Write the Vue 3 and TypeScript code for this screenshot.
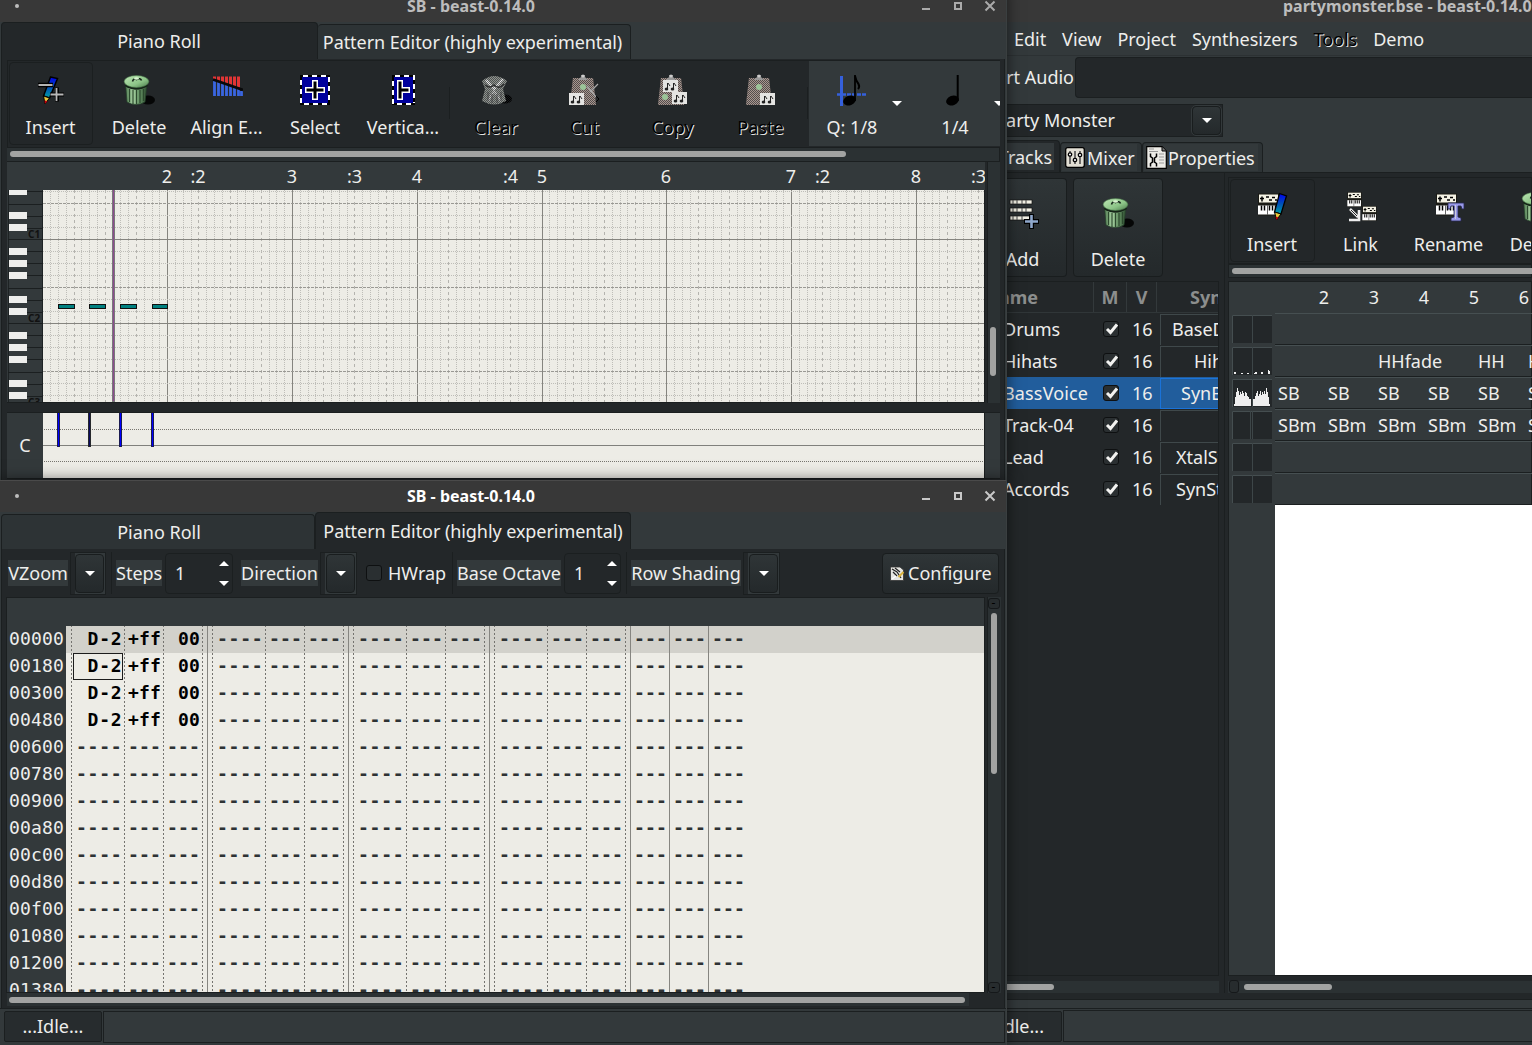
<script setup lang="ts">
interface Tool { label: string; icon: string; width: number; kind?: string }

const rollTools: Tool[] = [
  { label: 'Insert', icon: 'pencil', width: 84, kind: 'framed' },
  { label: 'Delete', icon: 'trash', width: 88 },
  { label: 'Align E...', icon: 'align', width: 87 },
  { label: 'Select', icon: 'select', width: 90 },
  { label: 'Vertica...', icon: 'vselect', width: 86 },
  { label: '', icon: '', width: 6, kind: 'sep' },
  { label: 'Clear', icon: 'clear', width: 89, kind: 'off' },
  { label: 'Cut', icon: 'cut', width: 88, kind: 'off' },
  { label: 'Copy', icon: 'copy', width: 88, kind: 'off' },
  { label: 'Paste', icon: 'paste', width: 88, kind: 'off' },
  { label: '', icon: '', width: 5, kind: 'sep' },
]
const trackTools: Tool[] = [
  { label: 'Insert', icon: 'tinsert', width: 85, kind: 'framed' },
  { label: 'Link', icon: 'tlink', width: 87 },
  { label: 'Rename', icon: 'trename', width: 89 },
  { label: 'Delete', icon: 'trash', width: 88 },
]

const ruler = [
  { x: 160, t: '2' }, { x: 191, t: ':2' }, { x: 285, t: '3' }, { x: 347.5, t: ':3' }, { x: 410, t: '4' },
  { x: 503.5, t: ':4' }, { x: 535, t: '5' }, { x: 659, t: '6' }, { x: 784, t: '7' }, { x: 815.5, t: ':2' },
  { x: 909, t: '8' }, { x: 971.5, t: ':3' },
]

// vertical grid: 16 ticks per bar, every fourth is a beat
const ticks = Array.from({ length: 120 }, (_, i) => {
  const k = i + 1
  return { x: Math.round(42.4 + 7.8 * k) - 43 + 0.5, kind: k % 16 === 0 ? 'bar' : k % 4 === 0 ? 'beat' : 'tick' }
})
const semis = Array.from({ length: 18 }, (_, i) => ({
  y: 1.5 + 12 * i,
  kind: i % 7 === 4 ? 'bar' : i % 7 === 1 ? 'mid' : 'dot',
}))
const blackKeys = [-2, 22, 34, 58, 70, 82, 106, 118, 142, 154, 166, 190, 202]
const notes = [[15, 17], [46, 17], [77, 17], [109, 16]]
const events = [14, 45, 76, 108]

const rows = ['00000', '00180', '00300', '00480', '00600', '00780', '00900', '00a80', '00c00', '00d80', '00f00', '01080', '01200', '01380']
const cells = [
  { w: 52, d: 4 }, { w: 39, d: 3 }, { w: 50, d: 3 },
  { w: 52, d: 4 }, { w: 39, d: 3 }, { w: 50, d: 3 },
  { w: 52, d: 4 }, { w: 39, d: 3 }, { w: 50, d: 3 },
  { w: 52, d: 4 }, { w: 39, d: 3 }, { w: 44, d: 3 },
  { w: 39, d: 3 }, { w: 39, d: 3 }, { w: 39, d: 3 },
]
const played = [' D-2', '+ff', ' 00']
const cellText = (r: number, c: number) => (r < 4 && c < 3 ? played[c] : '-'.repeat(cells[c].d))
const dashed = [5, 58, 97, 136, 146, 199, 238, 277, 287, 340, 379, 418, 428, 481, 520, 559]
const solid = [141, 282, 423, 564, 603, 642]

const tracks = [
  { name: 'Drums', syn: 'BaseD', pad: 11 },
  { name: 'Hihats', syn: 'Hih', pad: 33 },
  { name: 'BassVoice', syn: 'SynB', pad: 20 },
  { name: 'Track-04', syn: '', pad: 0 },
  { name: 'Lead', syn: 'XtalSt', pad: 15 },
  { name: 'Accords', syn: 'SynSt', pad: 15 },
]
const parts = [
  ['', '', '', '', '', ''],
  ['', '', 'HHfade', '', 'HH', 'HH'],
  ['SB', 'SB', 'SB', 'SB', 'SB', 'SB'],
  ['SBm', 'SBm', 'SBm', 'SBm', 'SBm', 'SBm'],
  ['', '', '', '', '', ''],
  ['', '', '', '', '', ''],
]
const menu = ['Edit', 'View', 'Project', 'Synthesizers', 'Tools', 'Demo']
</script>

<template>
  <div class="desktop">
    <svg class="defs" width="0" height="0">
      <defs>
        <linearGradient id="gcan" x1="0" x2="1"><stop offset="0" stop-color="#4f7a50" /><stop offset=".35" stop-color="#a9d3a4" /><stop offset=".6" stop-color="#6d9b6c" /><stop offset="1" stop-color="#2f4d31" /></linearGradient>
        <linearGradient id="glid" x1="0" x2="1" y1="0" y2="1"><stop offset="0" stop-color="#bfe8b6" /><stop offset=".6" stop-color="#8cc487" /><stop offset="1" stop-color="#4b7a4c" /></linearGradient>
        <linearGradient id="gpen" x1="0" x2="0" y1="0" y2="1"><stop offset="0" stop-color="#0000f0" /><stop offset=".5" stop-color="#0050b8" /><stop offset="1" stop-color="#00a0a0" /></linearGradient>
        <pattern id="dither" width="2" height="2" patternUnits="userSpaceOnUse"><rect width="1" height="1" fill="#232729" /><rect x="1" y="1" width="1" height="1" fill="#232729" /></pattern>
        <symbol id="trash" viewBox="0 0 32 32">
          <ellipse cx="25" cy="26" rx="7" ry="4.500" fill="#050606" />
          <path d="M2.500 9 L4 28 Q13 33 22 28 L24 9Z" fill="url(#gcan)" stroke="#24402a" stroke-width=".7" />
          <path d="M6.500 15v13M10 16v14M13.500 16v14M17 16v13M20.500 15v12" stroke="#2c4a2e" stroke-width="1.200" />
          <path d="M2.500 11 Q13 18 24.500 11" stroke="#142417" stroke-width="2.600" fill="none" />
          <ellipse cx="13.500" cy="7.500" rx="12.300" ry="6" fill="url(#glid)" stroke="#48754a" stroke-width=".6" />
          <path d="M9.500 7.500 Q10.500 4 13.500 5.500 Q17.500 3.500 18.500 6.500" stroke="#16261a" stroke-width="1.600" fill="none" />
          <ellipse cx="13.500" cy="4.500" rx="2.500" ry="1.200" fill="#d8f5d0" />
        </symbol>
        <symbol id="pencil" viewBox="0 0 32 32">
          <path d="M15.500 3 L22.500 4.500 L14.500 24 L8.500 22Z" fill="url(#gpen)" stroke="#000" stroke-width="1.500" />
          <path d="M8.500 22 L14.500 24 L10 30Z" fill="#e8c83c" stroke="#000" /><path d="M9.500 26.500 L12.500 27 L10 30Z" fill="#c00010" />
          <path d="M3 11H18" stroke="#000" stroke-width="4.500" /><path d="M3.500 11H17.500" stroke="#b4b4b4" stroke-width="2" />
          <path d="M15 20.500H29M22 13.500V27.500" stroke="#000" stroke-width="4" /><path d="M15.500 20.500H28.500M21.500 14V27" stroke="#b8b8b8" stroke-width="1.800" />
        </symbol>
        <symbol id="align" viewBox="0 0 32 32">
          <path d="M3.500 2.500v4M7.500 2.500v5M11.500 2.500v6M15.500 2.500v8M19.500 2.500v9M23.500 2.500v10M27.500 2.500v11" stroke="#e03535" stroke-width="3" />
          <path d="M3.500 7v15M7.500 8v14M11.500 9v13M15.500 11v11M19.500 12v10M23.500 14v8M27.500 15v7M30.500 17v5" stroke="#3a66e0" stroke-width="2.800" />
          <path d="M2 5.500L32 16" stroke="#08090a" stroke-width="2.800" />
        </symbol>
        <symbol id="select" viewBox="0 0 32 32">
          <rect x="1" y="1" width="30" height="30" fill="#00009c" />
          <rect x="2" y="2" width="28" height="28" fill="none" stroke="#000" stroke-width="2" />
          <path d="M4 2H30V28M28 30H2V4" fill="none" stroke="#fff" stroke-width="2" stroke-dasharray="5 4" />
          <path d="M6 16H26M16 6V26" stroke="#fff" stroke-width="6" /><path d="M7.500 16H24.500M16 7.500V24.500" stroke="#000" stroke-width="3" />
        </symbol>
        <symbol id="vselect" viewBox="0 0 32 32">
          <rect x="5" y="1" width="23" height="30" fill="#00009c" />
          <rect x="6" y="2" width="21" height="28" fill="none" stroke="#000" stroke-width="2" />
          <path d="M8 2H27V29M24 30H6V4" fill="none" stroke="#fff" stroke-width="2" stroke-dasharray="5 4" />
          <path d="M13 6V26M13 16H23" stroke="#fff" stroke-width="6" /><path d="M13 7.500V24.500M13 16H21.500" stroke="#000" stroke-width="3" />
        </symbol>
        <symbol id="clear" viewBox="0 0 32 32">
          <ellipse cx="25" cy="25" rx="7" ry="4.500" fill="#000" />
          <path d="M2 7 Q14 -3 27 7 L23 15 L26 27 Q14 34 2 27 L5 15Z" fill="#8f938e" />
          <path d="M6 6L14 15L23 5" stroke="#e8e8e8" stroke-width="2.500" fill="none" /><path d="M8 27L14 17L21 27" stroke="#c5c5c5" stroke-width="2" fill="none" />
          <path d="M5 11 Q10 15 14 11 Q19 16 24 10" stroke="#333" stroke-width="1.500" fill="none" />
          <path d="M8 18v9M12 20v9M17 20v9M21 18v9" stroke="#555" />
          <rect width="32" height="32" fill="url(#dither)" opacity=".6" />
        </symbol>
        <symbol id="card" viewBox="0 0 15 12">
          <rect width="15" height="12" fill="#e4e4e2" /><path d="M4.500 9V3M10.500 9V3" stroke="#222" fill="none" /><ellipse cx="3.500" cy="9" rx="1.800" ry="1.500" fill="#222" /><ellipse cx="9.500" cy="9" rx="1.800" ry="1.500" fill="#222" /><path d="M5 3l2 3M11 3l2 3" stroke="#222" />
        </symbol>
        <symbol id="board" viewBox="0 0 32 32">
          <path d="M5 4H25L28 31H2Z" fill="#a9968f" /><path d="M5 4H25L28 31H2Z" fill="url(#dither)" opacity=".65" />
          <path d="M10 6L13 3V1H17V3L20 6Z" fill="#999" /><circle cx="15" cy="2" r="1.500" fill="#ccc" />
        </symbol>
        <symbol id="cut" viewBox="0 0 32 32"><use href="#board" width="32" height="32" /><circle cx="15" cy="13" r="3" fill="#9bc498" /><path d="M19 12L28 23M30 10L22 18" stroke="#aaa" stroke-width="1.200" /><path d="M28 22l3 3-3 3" stroke="#000" fill="none" /><use href="#card" x="1" y="19" width="15" height="12" /></symbol>
        <symbol id="copy" viewBox="0 0 32 32"><use href="#board" width="32" height="32" /><use href="#card" x="7" y="6" width="15" height="12" /><circle cx="9" cy="23" r="3" fill="#9bc498" /><use href="#card" x="16" y="18" width="15" height="12" /></symbol>
        <symbol id="paste" viewBox="0 0 32 32"><use href="#board" width="32" height="32" /><circle cx="15" cy="13" r="3" fill="#9bc498" /><use href="#card" x="16" y="19" width="15" height="12" /></symbol>
        <symbol id="q8" viewBox="0 0 32 32"><path d="M5.500 2V32" stroke="#3560dc" stroke-width="3" /><path d="M1 20.500H31" stroke="#3560dc" stroke-width="2.500" stroke-dasharray="4 1" /><ellipse cx="13.500" cy="26.500" rx="6.500" ry="4.800" transform="rotate(-20 13.500 26.500)" /><path d="M19 27V1" stroke="#000" stroke-width="1.800" /><path d="M19 2Q20 7 22.500 10Q24 13 22 15" stroke="#000" stroke-width="2" fill="none" /></symbol>
        <symbol id="q4" viewBox="0 0 32 32"><ellipse cx="13.500" cy="26.500" rx="6.500" ry="4.800" transform="rotate(-20 13.500 26.500)" /><path d="M18.700 27V1" stroke="#000" stroke-width="2" /></symbol>
        <symbol id="keys" viewBox="0 0 21 22">
          <path d="M0 0H21V22H0Z" fill="#1a1a14" /><rect x="1" y="1" width="19" height="8" fill="#f4f2e4" /><rect x="0" y="12" width="20" height="9" fill="#fff" />
          <path d="M2 5h4M4 3v5M8 3.500h3M11 6.500h3M14 4h3M17 6.500h2" stroke="#000" stroke-width="1.500" /><path d="M3.500 12v5M6.500 12v5M11.500 12v5M14.500 12v5M17.500 12v5" stroke="#000" stroke-width="1.500" /><path d="M9.500 12v9" stroke="#000" stroke-width=".6" />
        </symbol>
        <symbol id="tinsert" viewBox="0 0 32 32"><use href="#keys" x="2" y="2" width="21" height="23" /><path d="M23.500 2.500L30.500 5L25 23L18.500 21Z" fill="url(#gpen)" stroke="#000" stroke-width="1.300" /><path d="M18.500 21L25 23L20.500 29Z" fill="#e8c83c" stroke="#000" /><path d="M19.500 25.500L22.500 26.500L20.500 29Z" fill="#c00010" /></symbol>
        <symbol id="tlink" viewBox="0 0 32 32"><use href="#keys" x="2" y="1" width="15" height="15" /><use href="#keys" x="17" y="15" width="15" height="15" /><path d="M5 18L13 26M14 19V29H4" stroke="#eee" stroke-width="2.600" fill="none" /><path d="M6 19L12 25" stroke="#222" /></symbol>
        <symbol id="trename" viewBox="0 0 32 32"><use href="#keys" x="3" y="2" width="21" height="23" /><path d="M15 12H31V18H29L28 15H25V26L28 27V30H18V27L21 26V15H18L17 18H15Z" fill="#9898e8" stroke="#232750" stroke-width=".8" /><path d="M22.500 14V28" stroke="#ccd" /></symbol>
        <symbol id="addtrack" viewBox="0 0 32 32"><g fill="#f2f0e4" stroke="#111" stroke-width=".7"><rect x="1" y="3" width="22" height="4" /><rect x="1" y="11" width="22" height="4" /><rect x="1" y="19" width="22" height="4" /></g><path d="M4 3v4M8 3v4M13 3v4M17 3v4M4 11v4M8 11v4M13 11v4M17 11v4M4 19v4M8 19v4M13 19v4" stroke="#444" /><path d="M15 24.500H30M22.500 17V32" stroke="#000" stroke-width="5" /><path d="M16 24.500H29M22.500 18V31" stroke="#8fa8cc" stroke-width="2.600" /></symbol>
        <symbol id="check" viewBox="0 0 16 16"><path d="M4 8L7.500 11.500L14 3.500" stroke="#f2f2f0" stroke-width="3" fill="none" /></symbol>
      </defs>
    </svg>

    <!-- main project window -->
    <section class="win main">
      <header class="title"><span class="name">partymonster.bse - beast-0.14.0</span></header>
      <nav class="menu"><span v-for="m in menu" :key="m" :class="{ off: m === 'Tools' }">{{ m }}</span></nav>
      <div class="audio"><span>Start Audio</span><div class="entry"></div></div>
      <div class="project"><div class="field">Party Monster</div><button class="drop"><i class="down"></i></button></div>
      <div class="mtabs">
        <div class="mtab on"><span>Tracks</span></div>
        <div class="mtab mixer"><span><svg width="20" height="21" viewBox="0 0 20 21"><rect x=".7" y=".7" width="18.600" height="19.600" rx="2" fill="#e2dfd4" stroke="#000" stroke-width="1.300" /><path d="M5 4v13M10 4v13M15 4v13" stroke="#444" stroke-width="1.500" /><g fill="#fff" stroke="#000" stroke-width="1.300"><circle cx="5" cy="7.500" r="1.700" /><circle cx="10" cy="13" r="1.700" /><circle cx="15" cy="8" r="1.700" /></g></svg>Mixer</span></div>
        <div class="mtab props"><span><svg width="21" height="23" viewBox="0 0 21 23"><path d="M.7 .7H16L20.300 5V22.300H.7Z" fill="#ecebe6" stroke="#000" stroke-width="1.200" /><path d="M16 .7V5H20.300" fill="#777" stroke="#000" /><path d="M3 3h5M3 5.500h9M13 8h5M13 11h5M13 14h5M13 17h5" stroke="#999" /><path d="M4.500 7.500v3l2 1.500v4l-2 1.500v3M10.500 7.500v3l-2 1.500v4l2 1.500v3" stroke="#000" stroke-width="1.500" fill="none" /></svg>Properties</span></div>
      </div>
      <div class="mpage">
        <div class="left">
          <div class="big">
            <button class="add"><svg width="32" height="32"><use href="#addtrack" /></svg><span>Add</span></button>
            <button class="del"><svg width="32" height="32"><use href="#trash" /></svg><span>Delete</span></button>
          </div>
          <div class="list">
            <div class="lhead"><b class="c1">Name</b><b class="c2">M</b><b class="c3">V</b><b class="c4">Syn</b></div>
            <div v-for="(t, i) in tracks" :key="t.name" class="lrow" :class="{ sel: i === 2 }">
              <span class="n">{{ t.name }}</span>
              <span class="m"><i class="box"><svg width="16" height="16"><use href="#check" /></svg></i></span>
              <span class="v">16</span>
              <span class="s" :style="{ paddingLeft: t.pad + 'px' }">{{ t.syn }}</span>
            </div>
          </div>
          <div class="hs"><div class="thumb"></div></div>
        </div>
        <div class="split"></div>
        <div class="right">
          <div class="ttools">
            <div v-for="t in trackTools" :key="t.label" class="tool" :class="t.kind" :style="{ width: t.width + 'px' }">
              <svg width="32" height="32"><use :href="'#' + t.icon" /></svg><span>{{ t.label }}</span>
            </div>
          </div>
          <div class="tscroll"><div class="thumb"></div></div>
          <div class="arr">
            <div class="aruler"><span v-for="n in [2, 3, 4, 5, 6]" :key="n">{{ n }}</span></div>
            <div class="abody">
              <div class="meters">
                <div v-for="i in 6" :key="i" class="meter">
                  <svg width="40" height="28">
                    <path d="M.500 28V.500H40" stroke="#454e50" fill="none" /><path d="M20.500 0V28" stroke="#3d4648" />
                    <path v-if="i === 4" d="M18.500 0V28" stroke="#3d4648" />
                    <path v-if="i === 2" fill="#eee" d="M2 25h2v2h-2zM9 26h2v1h-2zM15 26h2v1h-2zM22 26h3v1h-3zM23 25h2v1h-2zM29 25h2v2h-2zM36 23h1v4h-1zM37 24h1v3h-1z" />
                    <path v-if="i === 3" fill="#eee" d="M2 27V25H3V18H4V13H5V9H6V12H7V16H8V13H9V15H10V12H11V14H12V17H13V13H14V14H15V17H16V18H17V20H19V27ZM21 27V20H23V17H24V14H25V12H26V17H27V15H28V12H29V16H30V13H31V15H32V12H33V15H34V9H35V13H36V18H37V25H38V27Z" />
                  </svg>
                </div>
              </div>
              <div class="lanes">
                <div v-for="(p, i) in parts" :key="i" class="lane"><span v-for="(s, j) in p" :key="j">{{ s }}</span></div>
                <div class="blank"></div>
              </div>
            </div>
          </div>
          <div class="hs"><i class="nub"></i><div class="thumb"></div></div>
        </div>
      </div>
      <div class="mstatus"><div class="idle">...Idle...</div><div class="bar"></div></div>
    </section>

    <!-- piano roll window -->
    <section class="win roll">
      <header class="title"><i class="dot"></i><span class="name">SB - beast-0.14.0</span>
        <svg class="ctl" width="80" height="32" viewBox="0 0 80 32"><path d="M2 19H10" stroke="currentColor" stroke-width="2" /><rect x="35" y="13" width="6" height="6" fill="none" stroke="currentColor" stroke-width="2" /><path d="M65.500 11.500L74.500 20.500M74.500 11.500L65.500 20.500" stroke="currentColor" stroke-width="2" /></svg>
      </header>
      <div class="tabs"><div class="tab t1 on">Piano Roll</div><div class="tab t2">Pattern Editor (highly experimental)</div></div>
      <div class="page">
        <div class="tools">
          <template v-for="(t, i) in rollTools" :key="i">
            <div v-if="t.kind === 'sep'" class="tsep" :style="{ width: t.width + 'px' }"></div>
            <div v-else class="tool" :class="t.kind" :style="{ width: t.width + 'px' }">
              <svg width="32" height="32"><use :href="'#' + t.icon" /></svg><span>{{ t.label }}</span>
            </div>
          </template>
          <div class="quant">
            <div class="tool q"><svg width="32" height="32"><use href="#q8" /></svg><span>Q: 1/8</span></div><i class="down"></i>
            <div class="tool r"><svg width="32" height="32"><use href="#q4" /></svg><span>1/4</span></div><i class="down"></i>
          </div>
        </div>
        <div class="rscroll"><div class="thumb"></div></div>
        <div class="rollarea">
          <div class="rollcol">
            <svg class="ruler" width="978" height="28"><text v-for="r in ruler" :key="r.x" :x="r.x" y="20.500" text-anchor="middle">{{ r.t }}</text></svg>
            <div class="rollbody">
              <svg class="keys" width="36" height="212" shape-rendering="crispEdges">
                <rect width="36" height="212" fill="#33393b" />
                <path d="M1.500 0V212M35.500 0V212" stroke="#1e2324" />
                <g v-for="o in 3" :key="o">
                  <path :d="`M1 ${14.500 + 84 * (o - 1)}H36M1 ${49.500 + 84 * (o - 1)}H36`" stroke="#1b1f20" />
                  <path v-for="d in [1, 26, 38, 61, 73, 85]" :key="d" :d="`M20 ${d + 0.500 + 84 * (o - 1)}H36`" stroke="#1b1f20" />
                </g>
                <rect v-for="k in blackKeys" :key="k" x="2" :y="k" width="18" height="7" fill="#eeeeec" />
                <text v-for="o in 3" :key="'c' + o" x="21" :y="48 + 84 * (o - 1)">C{{ o }}</text>
              </svg>
              <svg class="grid" width="941" height="212" shape-rendering="crispEdges">
                <path v-for="t in ticks" :key="t.x" :class="t.kind" :d="`M${t.x} 0V212`" />
                <path v-for="s in semis" :key="s.y" :class="'h' + s.kind" :d="`M0 ${s.y}H941`" />
                <rect x="69" width="3" height="212" fill="#797779" /><rect x="70" width="1" height="211" fill="#8e4a90" />
                <g v-for="n in notes" :key="n[0]"><rect :x="n[0]" y="114" :width="n[1]" height="5" fill="#101010" /><rect :x="n[0] + 1" y="115" :width="n[1] - 2" height="3" fill="#008080" /></g>
              </svg>
            </div>
          </div>
          <div class="vs"><div class="thumb"></div></div>
        </div>
        <div class="ctlarea">
          <div class="clabel">C</div>
          <svg class="grid" width="941" height="65" shape-rendering="crispEdges">
            <path d="M1 16.500H941M1 48.500H941" stroke="#77756f" stroke-dasharray="1 1" /><path d="M0 32.500H941" stroke="#80807c" />
            <g v-for="(e, i) in events" :key="e"><rect :x="e" width="3" height="34" :fill="i === 1 ? '#26282c' : '#1a1a50'" /><rect :x="e + 1" width="1" height="33" :fill="i === 1 ? '#0b0b60' : '#0000ff'" /></g>
          </svg>
          <div class="corner"></div>
        </div>
      </div>
    </section>

    <!-- pattern editor window -->
    <section class="win pat">
      <header class="title active"><i class="dot"></i><span class="name">SB - beast-0.14.0</span>
        <svg class="ctl" width="80" height="32" viewBox="0 0 80 32"><path d="M2 19H10" stroke="currentColor" stroke-width="2" /><rect x="35" y="13" width="6" height="6" fill="none" stroke="currentColor" stroke-width="2" /><path d="M65.500 11.500L74.500 20.500M74.500 11.500L65.500 20.500" stroke="currentColor" stroke-width="2" /></svg>
      </header>
      <div class="tabs"><div class="tab t1">Piano Roll</div><div class="tab t2 on">Pattern Editor (highly experimental)</div></div>
      <div class="page">
        <div class="opts">
          <label class="l1">VZoom</label>
          <div class="combo first"><button class="drop"><i class="down"></i></button></div>
          <i class="vsep"></i>
          <label class="l2">Steps</label>
          <div class="spin s1"><span>1</span><div><i class="up"></i><i class="down"></i></div></div>
          <label class="l3">Direction</label>
          <div class="combo"><button class="drop"><i class="down"></i></button></div>
          <i class="box hw"></i><span class="plain">HWrap</span>
          <i class="vsep v2"></i>
          <label class="l4">Base Octave</label>
          <div class="spin s2"><span>1</span><div><i class="up"></i><i class="down"></i></div></div>
          <i class="vsep v3"></i>
          <label class="l5">Row Shading</label>
          <div class="combo"><button class="drop"><i class="down"></i></button></div>
          <button class="conf"><svg width="15" height="15" viewBox="0 0 15 15"><path d="M.5 1H10L13.500 4V14.500H.5Z" fill="#e6e6e2" stroke="#333" stroke-width=".8" /><path d="M2 3l5 3 4 6M3 6l4 4M5 2l5 4" stroke="#222" stroke-width="1.200" fill="none" /><path d="M13.500 6L8.500 11" stroke="#d9b23c" stroke-width="2" /><path d="M2 13l4-3" stroke="#fff" stroke-width="1.500" /></svg><span>Configure</span></button>
        </div>
        <div class="patarea">
          <div class="patcol">
            <div class="phead"></div>
            <div class="pbody">
              <div class="nums"><div v-for="r in rows" :key="r">{{ r }}</div></div>
              <div class="pgrid">
                <svg width="918" height="366" shape-rendering="crispEdges">
                  <rect width="918" height="27" fill="#d2d1cb" />
                  <path v-for="x in dashed" :key="x" :d="`M${x + 0.500} 0V366`" stroke="#74736f" stroke-dasharray="2 2" stroke-dashoffset="1" />
                  <path v-for="x in solid" :key="x" :d="`M${x + 0.500} 0V366`" stroke="#868580" />
                  <rect x="7.500" y="27.500" width="49" height="26" fill="none" stroke="#1c1c1c" />
                </svg>
                <div class="prows">
                  <div v-for="(r, i) in rows" :key="r" class="prow">
                    <span v-for="(c, j) in cells" :key="j" :class="{ hit: i < 4 && j < 3, wide: c.d === 4 }" :style="{ width: c.w + 'px' }">{{ cellText(i, j) }}</span>
                  </div>
                </div>
              </div>
            </div>
          </div>
          <div class="pvs"><i class="nub">-</i><div class="thumb"></div><i class="nub">-</i></div>
        </div>
        <div class="phs"><div class="thumb"></div></div>
      </div>
      <div class="status"><div class="idle">...Idle...</div><div class="bar"></div></div>
    </section>
  </div>
</template>

<style>
body { margin: 0; overflow: hidden; background: #232729; }
</style>

<style scoped>
* { box-sizing: border-box; }
.desktop { position: relative; width: 1532px; height: 1045px; overflow: hidden; font: 18px/24px "Noto Sans", sans-serif; color: #eeeeec; background: #232729; white-space: nowrap; }
.defs { position: absolute; }
svg { display: block; flex: none; }
button { font: inherit; color: inherit; padding: 0; margin: 0; background: linear-gradient(#2f3537, #24292b); border: 1px solid #191d1e; border-radius: 4px; }
i { font-style: normal; flex: none; }
.win { position: absolute; display: flex; flex-direction: column; background: #33393b; overflow: hidden; }
.roll { left: 0; top: -10px; width: 1007px; height: 490px; box-shadow: 0 0 14px rgba(0,0,0,.55); border-right: 1px solid #3a3f40; }
.pat { left: 0; top: 480px; width: 1007px; height: 565px; box-shadow: 0 0 14px rgba(0,0,0,.55); border-right: 1px solid #3a3f40; }
.main { left: 1000px; top: -10px; width: 532px; height: 1055px; }
.title { height: 32px; flex: none; background: #383838; display: flex; align-items: center; font: bold 16px/22px "Noto Sans", sans-serif; color: #bdbdbd; }
.title.active { color: #fff; box-shadow: inset 0 1px #4a4a4a; }
.title .dot { width: 4px; height: 4px; border-radius: 2px; background: #bdbdbd; margin-left: 15px; }
.roll .name, .pat .name { margin-left: 388px; width: 129px; }
.ctl { margin-left: 384px; color: #aaa; }
.active .ctl { color: #c8c8c8; }
.main .name { margin-left: 283px; }

.tabs { display: flex; height: 37px; flex: none; padding-left: 1px; align-items: flex-end; }
.tab { border: 1px solid #1b1f20; border-bottom: 0; background: #2d3335; height: 35px; line-height: 35px; text-align: center; border-radius: 4px 4px 0 0; }
.t1 { width: 314px; padding-left: 2px; }
.t2 { width: 316px; letter-spacing: -.07px; }
.tab.on { background: #232729; height: 37px; line-height: 37px; }
.roll .t1 { width: 317px; padding: 0 1px 0 0; } .roll .t2 { width: 313px; border-left: 0; height: 35px; padding-right: 3px; }
.page { margin-left: 1px; width: 1004px; flex: 1; min-height: 0; background: #232729; border-left: 1px solid #1b1f20; border-right: 1px solid #1b1f20; padding: 0 4px 0 5px; display: flex; flex-direction: column; }
.tools { display: flex; height: 88px; margin-top: 1px; flex: none; border: 1px solid #1b1f20; border-right: 0; padding: 1px 0 0 1px; overflow: hidden; }
.tool { height: 83px; display: flex; flex-direction: column; align-items: center; flex: none; padding-top: 12px; }
.tool span { line-height: 24px; margin-top: 9px; }
.tool.framed { border: 1px solid #1b1f20; border-radius: 4px; padding-top: 11px; padding-right: 1px; margin-right: 2px; }
.off { color: #000; text-shadow: 1px 1px 0 #e4e4e2; }
.tsep { height: 32px; margin-top: 25px; background: linear-gradient(#1b1f20, #1b1f20) 3px 0 / 1px 32px no-repeat; }
.quant { display: flex; align-items: center; background: #33393b; width: 191px; flex: none; height: 85px; margin-top: -1px; overflow: hidden; }
.quant .q { width: 88px; margin-left: -1px; }
.quant .tool.r { width: 106px; margin: 0 -10px 0 0; }
.quant .down { margin-left: -4px; }
.down { width: 0; height: 0; border: 5px solid transparent; border-top-color: #fff; border-bottom: 0; }
.up { width: 0; height: 0; border: 5px solid transparent; border-bottom-color: #fff; border-top: 0; }
.rscroll { height: 13px; flex: none; background: #2b3133; border-right: 1px solid #1b1f20; padding: 3px 0 0 3px; }
.thumb { background: #a2a3a2; border-radius: 3px; height: 6px; flex: none; }
.rscroll .thumb { width: 836px; }
.rollarea { display: flex; height: 242px; flex: none; border-top: 1px solid #1b1f20; }
.rollcol { width: 978px; border-right: 1px solid #1b1f20; border-bottom: 1px solid #1b1f20; }
.ruler { background: #33393b; fill: #eeeeec; font-size: 18px; }
.rollbody { display: flex; }
.keys text { font: bold 10px "Noto Sans", sans-serif; fill: #111; }
.grid { background: #edece6; }
.grid path { fill: none; }
.tick { stroke: #bebdb8; stroke-dasharray: 1 1; }
.beat { stroke: #b4b3ae; stroke-dasharray: 3 3; }
.bar { stroke: #85847f; }
.hdot { stroke: #bebdb8; stroke-dasharray: 1 1; }
.hmid { stroke: #9a9994; stroke-dasharray: 3 1; }
.hbar { stroke: #85847f; }
.vs { width: 14px; margin-left: 2px; background: #2b3133; border-left: 1px solid #1b1f20; padding: 165px 0 0 2px; }
.vs .thumb { width: 6px; height: 49px; }
.ctlarea { display: flex; height: 67px; margin-top: 9px; border: solid #1b1f20; border-width: 1px 0; }
.clabel { width: 36px; background: #33393b; text-align: center; line-height: 65px; }
.corner { flex: 1; background: #33393b; border-left: 1px solid #1b1f20; }

.opts { height: 48px; flex: none; display: flex; align-items: center; padding-left: 1px; }
.opts label { background: #33393b; height: 26px; line-height: 26px; flex: none; text-align: center; }
.opts .l1 { width: 60px; } .opts .l2 { width: 46px; } .opts .l3 { width: 77px; margin-left: 8px; } .opts .l4 { width: 104px; } .opts .l5 { width: 110px; }
.combo { width: 37px; height: 43px; border: 1px solid #1b1f20; padding: 1px 1px 1px 4px; margin-left: 2px; background: linear-gradient(90deg, #232729 4px, #33393b 4px); flex: none; }
.combo.first { width: 36px; }
.drop { width: 29px; height: 39px; display: flex; align-items: center; justify-content: center; }
.combo .drop { margin-left: 1px; }
.combo.first .drop { margin-left: 0; }
.vsep { width: 1px; height: 42px; background: #1b1f20; margin: 0 4px 0 5px; }
.vsep.v2 { margin-left: 7px; }
.spin { height: 41px; border: 1px solid #1b1f20; border-radius: 4px; display: flex; justify-content: space-between; flex: none; margin-left: 3px; padding-left: 9px; line-height: 39px; }
.s1 { width: 68px; } .s2 { width: 57px; }
.spin div { width: 16px; display: flex; flex-direction: column; justify-content: space-between; padding: 7px 3px; }
.box { width: 16px; height: 16px; border: 1px solid #0e1011; border-radius: 3px; background: #2a2f31; display: block; }
.box svg { margin: -1px 0 0 -1px; }
.hw { margin: 0 6px 0 9px; }
.plain { width: 57px; }
.conf { width: 117px; height: 41px; margin-left: 102px; display: flex; align-items: center; padding-left: 7px; flex: none; }
.conf span { margin-left: 3px; }
.patarea { display: flex; height: 396px; flex: none; }
.patcol { width: 979px; border: 1px solid #1b1f20; margin-left: -1px; }
.phead { height: 28px; background: #33393b; }
.pbody { display: flex; height: 366px; overflow: hidden; font: 18px/27px "DejaVu Sans Mono", monospace; letter-spacing: .164px; }
.nums { width: 59px; background: #33393b; padding-left: 2px; }
.nums div { height: 27px; line-height: 26px; }
.pgrid { position: relative; width: 918px; background: #edece6; }
.prows { position: absolute; left: 10px; top: 0; }
.prow { display: flex; height: 27px; line-height: 26px; color: #2e3234; font-weight: bold; }
.prow span { white-space: pre; flex: none; }
.prow .wide { letter-spacing: .75px; }
.prow .hit { color: #000; }
.pvs { width: 14px; margin-left: 2px; padding-right: 2px; background: #2b3133; border-left: 1px solid #1b1f20; display: flex; flex-direction: column; align-items: center; }
.nub { width: 12px; height: 11px; background: #272c2e; border: 1px solid #15181a; border-radius: 3px; font-size: 12px; line-height: 8px; text-align: center; color: #000; }
.pvs .nub:first-child { margin-top: 1px; } .pvs .nub:last-child { margin-top: auto; }
.pvs .thumb { width: 6px; height: 161px; margin-top: 4px; }
.phs { height: 13px; background: #2b3133; width: 962px; padding: 4px 0 0 2px; }
.phs .thumb { width: 956px; }
.status { height: 37px; flex: none; display: flex; border-top: 1px solid #1b1f20; padding: 2px 1px 3px 4px; }
.idle { width: 98px; border: 1px solid #1b1f20; background: #272c2e; text-align: center; line-height: 29px; border-radius: 2px; height: 31px; flex: none; }
div.bar { flex: 1; height: 32px; border: 1px solid #1b1f20; margin-left: 1px; }

.menu { display: flex; height: 34px; padding: 5px 0 0 14px; gap: 16px; border-bottom: 1px solid #2c3133; flex: none; letter-spacing: -.03px; }
.audio { height: 43px; display: flex; align-items: center; flex: none; }
.audio span { width: 74px; direction: rtl; margin-top: -2px; }
.entry { flex: 1; height: 41px; background: #232729; border: 1px solid #1b1f20; border-right: 0; border-radius: 4px 0 0 4px; margin-left: 1px; }
.project { width: 223px; height: 33px; margin-top: 5px; border: 1px solid #1b1f20; background: #232729; display: flex; flex: none; }
.project .field { width: 190px; height: 31px; line-height: 30px; padding-right: 76px; direction: rtl; overflow: hidden; }
.project .drop { height: 29px; width: 29px; margin: 1px; outline: 1px solid #33393b; }
.mtabs { display: flex; align-items: flex-end; height: 35px; flex: none; }
.mtab { background: #2d3335; border: 1px solid #1b1f20; border-bottom: 0; height: 30px; border-radius: 4px 4px 0 0; padding: 1px 4px 0 1px; }
.mtab span { display: flex; align-items: center; background: #33393b; height: 27px; }
.mtab.on { background: #232729; height: 32px; width: 60px; direction: rtl; padding: 2px 5px 0 0; border-radius: 0 4px 0 0; }
.mtab.on span { padding-right: 2px; }
.mixer { width: 82px; } .mixer span { gap: 2px; padding-left: 3px; }
.props { width: 121px; letter-spacing: -.08px; } .props span { gap: 1px; padding-left: 2px; }
.mpage { background: #232729; display: flex; height: 828px; flex: none; border-top: 1px solid #1b1f20; border-bottom: 1px solid #1b1f20; }
.left { width: 219px; padding-top: 5px; }
.big { display: flex; gap: 6px; height: 99px; }
.big button { display: flex; flex-direction: column; align-items: center; padding-top: 18px; }
.big span { margin-top: 18px; }
.add { width: 67px; border-left: 0; padding-right: 21px !important; }
.add svg { margin-left: 5px; }
.big .del { width: 90px; }
.list { margin-top: 4px; height: 695px; border: 1px solid #1b1f20; border-left: 0; overflow: hidden; }
.lhead { display: flex; height: 31px; border-bottom: 1px solid #303638; color: #8c8e8d; line-height: 31px; }
.lhead b { flex: none; border-right: 1px solid #33393b; text-align: center; overflow: hidden; }
.c1 { width: 94px; padding-right: 55px; direction: rtl; } .c2 { width: 33px; } .c3 { width: 30px; } .lhead .c4 { width: 61px; padding-left: 33px; text-align: left; border: 0; }
.lrow { display: flex; height: 32px; line-height: 32px; }
.lrow.sel { background: #215d9c; }
.n { width: 103px; padding-left: 3px; } .m { width: 26px; padding-top: 8px; } .v { width: 31px; padding-left: 3px; } .s { flex: 1; height: 31px; margin-top: 1px; line-height: 29px; border: solid #3f484a; border-width: 1px 0 0 1px; overflow: hidden; }
.sel .n { letter-spacing: .15px; }
.sel .s { border: 1px solid #1a73d9; border-right: 0; }
.hs { height: 12px; margin-top: 5px; background: #2b3133; padding-top: 3px; display: flex; }
.left .hs .thumb { width: 54px; }
.split { width: 9px; background: linear-gradient(#1b1f20, #1b1f20) 5px 0 / 1px 820px no-repeat; }
.right { width: 304px; overflow: hidden; padding-top: 4px; }
.ttools { display: flex; height: 87px; border: 1px solid #1b1f20; padding: 1px; overflow: hidden; }
.ttools .tool.framed { margin-right: 2px; }
.tscroll { height: 14px; background: #2b3133; border: 1px solid #1b1f20; padding: 3px; }
.tscroll .thumb { width: 320px; }
.arr { margin-top: 3px; height: 695px; border: 1px solid #1b1f20; background: #33393b; }
.aruler { height: 31px; padding-left: 70px; display: flex; line-height: 31px; }
.aruler span { width: 50px; text-align: center; flex: none; }
.abody { display: flex; }
.meters { width: 46px; flex: none; padding: 2px 0 0 3px; }
.meter { height: 32px; } .meter svg { background: #232729; }
.lanes { width: 300px; }
.lane { height: 32px; border-top: 1px solid #464f51; border-bottom: 1px solid #1b1f20; display: flex; line-height: 31px; }
.lane span { width: 50px; flex: none; padding-left: 3px; }
.blank { background: #fff; height: 470px; }
.right .hs .thumb { width: 88px; margin-left: 5px; }
.right .hs .nub { width: 10px; height: 13px; margin-top: -4px; margin-left: 1px; }
.mstatus { display: flex; height: 37px; flex: none; margin-top: 8px; padding-top: 1px; border-top: 1px solid #1b1f20; }
.mstatus .idle { width: 62px; direction: rtl; padding-right: 17px; margin-top: 1px; }
.mstatus .bar { margin-left: 1px; border-right: 0; }
</style>
